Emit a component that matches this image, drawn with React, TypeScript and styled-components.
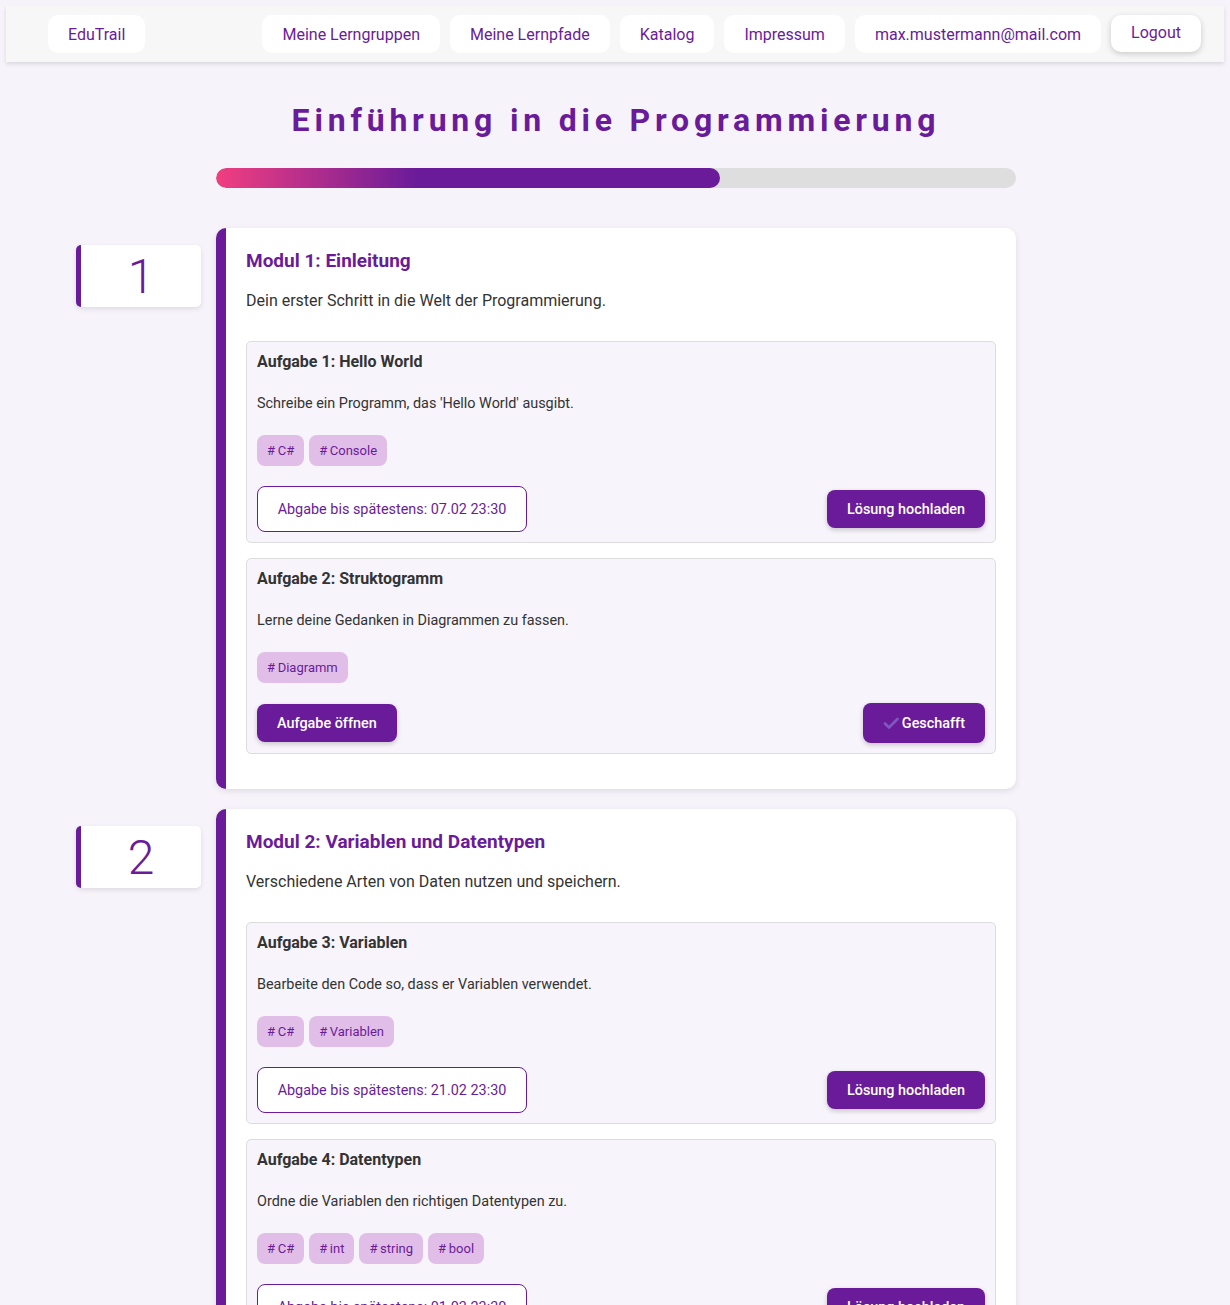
import React from 'react';
import styled, { createGlobalStyle } from 'styled-components';

// --- Data ---

interface Task {
  title: string;
  text: string;
  tags: string[];
  deadline?: string;
  done?: boolean;
}

interface Module {
  number: number;
  title: string;
  text: string;
  tasks: Task[];
}

const modules: Module[] = [
  {
    number: 1,
    title: 'Modul 1: Einleitung',
    text: 'Dein erster Schritt in die Welt der Programmierung.',
    tasks: [
      {
        title: 'Aufgabe 1: Hello World',
        text: "Schreibe ein Programm, das 'Hello World' ausgibt.",
        tags: ['C#', 'Console'],
        deadline: '07.02 23:30',
      },
      {
        title: 'Aufgabe 2: Struktogramm',
        text: 'Lerne deine Gedanken in Diagrammen zu fassen.',
        tags: ['Diagramm'],
        done: true,
      },
    ],
  },
  {
    number: 2,
    title: 'Modul 2: Variablen und Datentypen',
    text: 'Verschiedene Arten von Daten nutzen und speichern.',
    tasks: [
      {
        title: 'Aufgabe 3: Variablen',
        text: 'Bearbeite den Code so, dass er Variablen verwendet.',
        tags: ['C#', 'Variablen'],
        deadline: '21.02 23:30',
      },
      {
        title: 'Aufgabe 4: Datentypen',
        text: 'Ordne die Variablen den richtigen Datentypen zu.',
        tags: ['C#', 'int', 'string', 'bool'],
        deadline: '01.03 23:30',
      },
    ],
  },
];

const purple = '#6a1b9a';

// --- Global ---

const GlobalStyle = createGlobalStyle`
  * { box-sizing: border-box; }
  body {
    margin: 0;
    background: #f6f3fa;
    font-family: Roboto, "Noto Sans", Arial, sans-serif;
    color: #333;
  }
`;

// --- Navigation ---

const NavBar = styled.nav`
  margin: 6px;
  height: 56px;
  background: #f7f7f7;
  box-shadow: 0 2px 4px rgba(0, 0, 0, 0.12);
  display: flex;
  align-items: center;
  justify-content: space-between;
  padding: 0 23px 0 42px;
`;

const NavGroup = styled.div`
  display: flex;
  gap: 10px;
`;

const NavButton = styled.a<{ $raised?: boolean }>`
  display: inline-flex;
  align-items: center;
  height: ${p => (p.$raised ? '37px' : '38px')};
  padding: 0 20px;
  padding-bottom: ${p => (p.$raised ? '2px' : '0')};
  background: #fff;
  border-radius: 10px;
  color: ${purple};
  font-size: 16px;
  cursor: pointer;
  box-shadow: ${p => (p.$raised ? '0 2px 6px rgba(0,0,0,0.18)' : 'none')};
`;

// --- Header ---

const Main = styled.main`
  padding-left: 2px;
`;

const Title = styled.h1`
  margin: 40px 0 0;
  text-align: center;
  font-size: 32px;
  line-height: 37px;
  font-weight: 700;
  letter-spacing: 4.8px;
  color: ${purple};
`;

const Progress = styled.div`
  width: 800px;
  height: 20px;
  margin: 29px auto 40px;
  background: #dedede;
  border-radius: 10px;
  overflow: hidden;
`;

const ProgressFill = styled.div`
  height: 100%;
  border-radius: 10px;
  background: linear-gradient(90deg, #f23e80 0%, ${purple} 40%, ${purple} 100%);
`;

// --- Modules ---

const ModuleList = styled.div`
  display: flex;
  flex-direction: column;
  gap: 20px;
`;

const ModuleRow = styled.section`
  display: grid;
  grid-template-columns: 1fr 800px 1fr;
  align-items: start;
`;

const NumberBox = styled.div`
  justify-self: end;
  margin: 17px 15px 0 0;
  width: 125px;
  height: 62px;
  background: #fff;
  border-left: 5px solid ${purple};
  border-radius: 5px;
  box-shadow: 0 2px 5px rgba(0, 0, 0, 0.1);
  display: flex;
  align-items: center;
  justify-content: center;
  font-size: 48px;
  font-weight: 300;
  color: ${purple};
`;

const ModuleCard = styled.div`
  background: #fff;
  border-left: 10px solid ${purple};
  border-radius: 10px;
  box-shadow: 0 2px 6px rgba(0, 0, 0, 0.1);
  padding: 21px 20px 20px 20px;
`;

const ModuleTitle = styled.h2`
  margin: 0;
  font-size: 19px;
  line-height: 24px;
  font-weight: 700;
  color: ${purple};
`;

const ModuleText = styled.p`
  margin: 18px 0 31px;
  font-size: 16px;
  line-height: 19px;
  color: #333;
`;

// --- Tasks ---

const TaskBox = styled.div`
  background: #f7f4fb;
  border: 1px solid #ddd;
  border-radius: 5px;
  padding: 10px;
  margin-bottom: 15px;
`;

const TaskTitle = styled.h3`
  margin: 0;
  font-size: 16px;
  line-height: 20px;
  font-weight: 700;
  color: #333;
`;

const TaskText = styled.p`
  margin: 22px 0 0;
  font-size: 14.4px;
  line-height: 20px;
  color: #333;
`;

const TagList = styled.div`
  display: flex;
  gap: 5px;
  margin-top: 21px;
`;

const Tag = styled.span`
  display: inline-flex;
  align-items: center;
  height: 31px;
  padding: 0 10px;
  border-radius: 8px;
  background: #e1bee7;
  color: ${purple};
  font-size: 13px;
`;

const ActionRow = styled.div`
  display: flex;
  justify-content: space-between;
  align-items: center;
  margin-top: 20px;
`;

const Deadline = styled.div`
  display: inline-flex;
  align-items: center;
  justify-content: center;
  width: 270px;
  height: 46px;
  background: #fff;
  border: 1px solid ${purple};
  border-radius: 8px;
  color: ${purple};
  font-size: 14.4px;
`;

const Button = styled.button<{ $tall?: boolean }>`
  display: inline-flex;
  align-items: center;
  gap: 3px;
  height: ${p => (p.$tall ? '40px' : '38px')};
  padding: 0 20px;
  border: none;
  border-radius: 8px;
  background: ${purple};
  color: #fff;
  font-family: Roboto, sans-serif;
  font-size: 14.4px;
  font-weight: 500;
  box-shadow: 0 2px 5px rgba(0, 0, 0, 0.2);
  cursor: pointer;
`;

const CheckIcon = () => (
  <svg width="16" height="16" viewBox="0 0 16 16">
    <path d="M2 8.5 L6 12.5 L14.5 4" fill="none" stroke="#7e57c2" strokeWidth="2.6" strokeLinecap="round" strokeLinejoin="round" />
  </svg>
);

const TaskItem: React.FC<{ task: Task }> = ({ task }) => (
  <TaskBox>
    <TaskTitle>{task.title}</TaskTitle>
    <TaskText>{task.text}</TaskText>
    <TagList>
      {task.tags.map(t => (
        <Tag key={t}>#&thinsp;{t}</Tag>
      ))}
    </TagList>
    <ActionRow>
      {task.done ? (
        <>
          <Button>Aufgabe öffnen</Button>
          <Button $tall>
            <CheckIcon />
            Geschafft
          </Button>
        </>
      ) : (
        <>
          <Deadline>Abgabe bis spätestens: {task.deadline}</Deadline>
          <Button>Lösung hochladen</Button>
        </>
      )}
    </ActionRow>
  </TaskBox>
);

const App: React.FC = () => {
  const progress = 63;
  return (
    <>
      <GlobalStyle />
      <NavBar>
        <NavButton>EduTrail</NavButton>
        <NavGroup>
          <NavButton>Meine Lerngruppen</NavButton>
          <NavButton>Meine Lernpfade</NavButton>
          <NavButton>Katalog</NavButton>
          <NavButton>Impressum</NavButton>
          <NavButton>max.mustermann@mail.com</NavButton>
          <NavButton $raised>Logout</NavButton>
        </NavGroup>
      </NavBar>

      <Main>
        <Title>Einführung in die Programmierung</Title>
        <Progress>
          <ProgressFill style={{ width: `${progress}%` }} />
        </Progress>

        <ModuleList>
          {modules.map(m => (
            <ModuleRow key={m.number}>
              <NumberBox>{m.number}</NumberBox>
              <ModuleCard>
                <ModuleTitle>{m.title}</ModuleTitle>
                <ModuleText>{m.text}</ModuleText>
                {m.tasks.map(t => (
                  <TaskItem key={t.title} task={t} />
                ))}
              </ModuleCard>
            </ModuleRow>
          ))}
        </ModuleList>
      </Main>
    </>
  );
};

export default App;
